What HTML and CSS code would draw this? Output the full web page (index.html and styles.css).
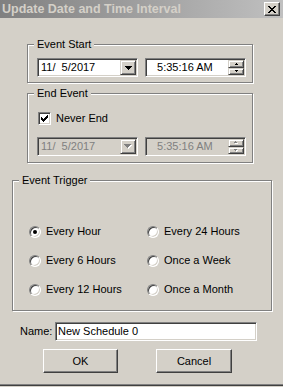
FILE: index.html
```html
<!DOCTYPE html>
<html>
<head>
<meta charset="utf-8">
<link rel="stylesheet" href="styles.css">
</head>
<body>
<div class="window">
  <div class="titlebar">
    <span class="title">Update Date and Time Interval</span>
    <span class="close"><svg width="8" height="7" viewBox="0 0 8 7" shape-rendering="crispEdges"><path d="M0 0h2v1H0zM6 0h2v1H6zM1 1h2v1H1zM5 1h2v1H5zM2 2h4v1H2zM3 3h2v1H3zM2 4h4v1H2zM1 5h2v1H1zM5 5h2v1H5zM0 6h2v1H0zM6 6h2v1H6z" fill="#000"/></svg></span>
  </div>

  <div class="group g-start">
    <div class="legend">Event Start</div>
    <div class="fields">
      <div class="field date"><span class="val">11/  5/2017</span><span class="ddbtn"><svg width="7" height="4" viewBox="0 0 7 4" shape-rendering="crispEdges"><path d="M0 0h7v1H0zM1 1h5v1H1zM2 2h3v1H2zM3 3h1v1H3z" fill="#000"/></svg></span></div>
      <div class="field time"><span class="val"> 5:35:16 AM</span><span class="spins"><span class="sbtn"><svg width="3" height="2" viewBox="0 0 3 2" shape-rendering="crispEdges"><path d="M1 0h1v1H1zM0 1h3v1H0z" fill="#000"/></svg></span><span class="sbtn"><svg width="3" height="2" viewBox="0 0 3 2" shape-rendering="crispEdges"><path d="M0 0h3v1H0zM1 1h1v1H1z" fill="#000"/></svg></span></span></div>
    </div>
  </div>

  <div class="group g-end">
    <div class="legend">End Event</div>
    <label class="check-row"><span class="checkbox"><svg width="7" height="7" viewBox="0 0 7 7" shape-rendering="crispEdges"><path d="M6 0h1v1H6zM5 1h2v1H5zM0 2h1v1H0zM4 2h3v1H4zM0 3h2v1H0zM3 3h3v1H3zM0 4h5v1H0zM1 5h3v1H1zM2 6h1v1H2z" fill="#000"/></svg></span><span>Never End</span></label>
    <div class="fields">
      <div class="field date disabled"><span class="val">11/  5/2017</span><span class="ddbtn"><svg width="8" height="5" viewBox="0 0 8 5" shape-rendering="crispEdges"><path d="M1 1h7v1H1zM2 2h5v1H2zM3 3h3v1H3zM4 4h1v1H4z" fill="#fff"/><path d="M0 0h7v1H0zM1 1h5v1H1zM2 2h3v1H2zM3 3h1v1H3z" fill="#808080"/></svg></span></div>
      <div class="field time disabled"><span class="val"> 5:35:16 AM</span><span class="spins"><span class="sbtn"><svg width="4" height="3" viewBox="0 0 4 3" shape-rendering="crispEdges"><path d="M2 1h1v1H2zM1 2h3v1H1z" fill="#fff"/><path d="M1 0h1v1H1zM0 1h3v1H0z" fill="#808080"/></svg></span><span class="sbtn"><svg width="4" height="3" viewBox="0 0 4 3" shape-rendering="crispEdges"><path d="M1 1h3v1H1zM2 2h1v1H2z" fill="#fff"/><path d="M0 0h3v1H0zM1 1h1v1H1z" fill="#808080"/></svg></span></span></div>
    </div>
  </div>

  <div class="group g-trigger">
    <div class="legend">Event Trigger</div>
    <div class="radios">
      <label class="opt"><span class="radio on"></span><span>Every Hour</span></label>
      <label class="opt"><span class="radio"></span><span>Every 24 Hours</span></label>
      <label class="opt"><span class="radio"></span><span>Every 6 Hours</span></label>
      <label class="opt"><span class="radio"></span><span>Once a Week</span></label>
      <label class="opt"><span class="radio"></span><span>Every 12 Hours</span></label>
      <label class="opt"><span class="radio"></span><span>Once a Month</span></label>
    </div>
  </div>

  <div class="name-row">
    <span class="name-label">Name:</span>
    <div class="field name"><span class="val">New Schedule 0</span></div>
  </div>

  <div class="buttons">
    <div class="btn ok">OK</div>
    <div class="btn cancel">Cancel</div>
  </div>
</div>
</body>
</html>
```
FILE: styles.css
```css
* { box-sizing: border-box; margin: 0; padding: 0; }
html, body { background: #d4d0c8; }
body {
  font-family: "Liberation Sans", Arial, sans-serif;
  font-size: 11px;
  line-height: 13px;
  color: #000;
}
.window {
  width: 283px;
  height: 386px;
  background: #d4d0c8;
  display: flex;
  flex-direction: column;
  overflow: hidden;
  border-bottom: 1px solid #404040;
  box-shadow: inset 0 -1px 0 #808080;
}
.titlebar {
  height: 18px;
  flex: none;
  background: linear-gradient(to right, #808080, #c0c0c0);
  display: flex;
  align-items: center;
  justify-content: space-between;
  padding: 0 3px 0 2px;
}
.title {
  font-weight: bold;
  color: #d4d0c8;
  font-size: 12.5px;
  line-height: 14px;
  white-space: nowrap;
}
.close {
  width: 16px;
  height: 14px;
  background: #d4d0c8;
  border: 1px solid;
  border-color: #fff #404040 #404040 #fff;
  box-shadow: inset -1px -1px 0 #808080;
  display: flex;
  align-items: center;
  justify-content: center;
}
.close svg { display: block; }

.group {
  flex: none;
  border: 1px solid #808080;
  box-shadow: inset 1px 1px 0 #fff, 1px 1px 0 #fff;
  display: flex;
  flex-direction: column;
  align-items: flex-start;
}
.legend {
  margin: -7px 0 0 6px;
  padding: 0 3px;
  height: 13px;
  background: #d4d0c8;
  white-space: nowrap;
}
.g-start { margin: 26px 0 0 27px; width: 226px; height: 39px; }
.g-end { margin: 10px 0 0 27px; width: 226px; height: 70px; }
.g-trigger { margin: 17px 0 0 12px; width: 260px; height: 131px; }

.fields {
  display: flex;
  gap: 7px;
  margin: 7px 0 0 9px;
}
.g-end .fields { margin-top: 12px; }

.field {
  height: 19px;
  border: 1px solid;
  border-color: #808080 #fff #fff #808080;
  box-shadow: inset 1px 1px 0 #404040, inset -1px -1px 0 #d4d0c8;
  background: #fff;
  display: flex;
  align-items: center;
  padding: 1px;
}
.field .val {
  flex: 1;
  white-space: pre;
  padding-left: 2px;
}
.field.date { width: 101px; }
.field.time { width: 101px; }
.field.time .val { padding-left: 7px; }
.field.disabled { background: #d4d0c8; color: #808080; }

.ddbtn {
  width: 16px;
  height: 15px;
  background: #d4d0c8;
  border: 1px solid;
  border-color: #d4d0c8 #404040 #404040 #d4d0c8;
  box-shadow: inset 1px 1px 0 #fff, inset -1px -1px 0 #808080;
  display: flex;
  align-items: center;
  justify-content: center;
}
.ddbtn svg, .sbtn svg { display: block; }

.spins {
  width: 16px;
  height: 15px;
  display: flex;
  flex-direction: column;
}
.sbtn {
  flex: 1;
  background: #d4d0c8;
  border: 1px solid;
  border-color: #d4d0c8 #404040 #404040 #d4d0c8;
  box-shadow: inset 1px 1px 0 #fff, inset -1px -1px 0 #808080;
  display: flex;
  align-items: center;
  justify-content: center;
}

.check-row {
  display: flex;
  align-items: center;
  gap: 5px;
  margin: 12px 0 0 10px;
  height: 13px;
}
.checkbox {
  width: 13px;
  height: 13px;
  border: 1px solid;
  border-color: #808080 #fff #fff #808080;
  box-shadow: inset 1px 1px 0 #404040, inset -1px -1px 0 #d4d0c8;
  background: #fff;
  display: flex;
  align-items: center;
  justify-content: center;
}
.checkbox svg { display: block; }

.radios {
  display: grid;
  grid-template-columns: 118px auto;
  row-gap: 16px;
  margin: 38px 0 0 16px;
}
.opt {
  display: flex;
  align-items: center;
  gap: 5px;
  height: 13px;
  white-space: nowrap;
}
.radio {
  width: 12px;
  height: 12px;
  border-radius: 50%;
  border: 1px solid;
  border-color: #808080 #fff #fff #808080;
  box-shadow: inset 1px 1px 0 #404040, inset -1px -1px 0 #d4d0c8;
  background: #fff;
  display: flex;
  align-items: center;
  justify-content: center;
}
.radio.on::after {
  content: "";
  width: 4px;
  height: 4px;
  border-radius: 50%;
  background: #000;
}

.name-row {
  flex: none;
  display: flex;
  align-items: center;
  margin: 11px 0 0 20px;
}
.name-label { width: 35px; }
.field.name { width: 202px; }
.field.name .val { padding-left: 1px; }

.buttons {
  flex: none;
  display: flex;
  gap: 38px;
  margin: 8px 0 0 43px;
}
.btn {
  height: 24px;
  border: 1px solid;
  border-color: #fff #404040 #404040 #fff;
  box-shadow: inset -1px -1px 0 #808080;
  background: #d4d0c8;
  display: flex;
  align-items: center;
  justify-content: center;
}
.btn.ok { width: 75px; }
.btn.cancel { width: 76px; }
```
